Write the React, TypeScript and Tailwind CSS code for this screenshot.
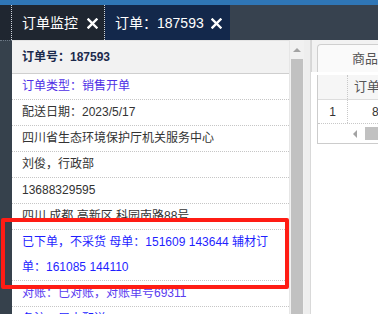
import React from 'react';

const CloseMark: React.FC = () => (
  <svg width="11" height="11" viewBox="0 0 11 11" className="shrink-0">
    <path d="M1.5 1.5 L9.5 9.5 M9.5 1.5 L1.5 9.5" stroke="#fff" strokeWidth="2.4" strokeLinecap="square" />
  </svg>
);

const rows: { text: React.ReactNode; color: string }[] = [
  { text: '订单类型：销售开单', color: 'text-[#4f2fe6]' },
  { text: '配送日期：2023/5/17', color: 'text-[#333333]' },
  { text: '四川省生态环境保护厅机关服务中心', color: 'text-[#333333]' },
  { text: '刘俊，行政部', color: 'text-[#333333]' },
  { text: '13688329595', color: 'text-[#333333]' },
  { text: '四川 成都 高新区 科园南路88号', color: 'text-[#333333]' },
  {
    text: (
      <>
        已下单，不采货 母单：151609 143644 辅材订
        <br />
        单：161085 144110
      </>
    ),
    color: 'text-[#1f1fff]',
  },
  { text: '对账：已对账，对账单号69311', color: 'text-[#5a3cf0]' },
  { text: '备注：周末配送', color: 'text-[#1f1fff]' },
];

export default function App() {
  return (
    <div className="relative h-[314px] w-[378px] overflow-hidden bg-white font-['Liberation_Sans','Noto_Sans_CJK_SC',sans-serif]">
      <div className="h-[5px] bg-[#2f76b6]" />

      {/* tab bar */}
      <div className="flex h-[35px] bg-[#37424f]">
        <div className="w-[11px] bg-[#1f2630]" />
        <div className="flex w-[94px] items-center justify-between border-x border-dotted border-[#cfd6de] bg-[#1f2630] pl-[10px] pr-[6px] pt-[2px] text-[14px] text-white">
          <span>订单监控</span>
          <CloseMark />
        </div>
        <div className="flex w-[125px] items-center justify-between bg-[#13284b] pl-[10px] pr-[8px] pt-[2px] text-[14px] text-white">
          <span>订单：187593</span>
          <CloseMark />
        </div>
      </div>

      {/* body */}
      <div className="flex h-[274px] overflow-hidden">
        <div className="w-[12px] shrink-0 border-t border-dotted border-[#6b7784] bg-[#36414c]" />

        <div className="flex w-[277px] shrink-0 flex-col border-t border-[#e4e4e4]">
          <div className="flex h-[33px] shrink-0 items-center border-b border-[#cfcfcf] bg-[#f2f2f2] pl-[10px] text-[12px] font-bold text-[#1c2a4d]">
            订单号：187593
          </div>
          {rows.map((r, i) => (
            <div
              key={i}
              className={`shrink-0 border-b border-dotted border-[#c6c6c6] pl-[10px] text-[12px] leading-[25px] whitespace-nowrap ${r.color}`}
            >
              {r.text}
            </div>
          ))}
        </div>

        {/* vertical scrollbar */}
        <div className="flex w-[15px] shrink-0 flex-col border-l border-[#e6e6e6] bg-[#f1f1f1]">
          <div className="flex h-[19px] shrink-0 items-center justify-center">
            <div className="h-0 w-0 border-x-[4px] border-b-[4px] border-x-transparent border-b-[#a3a3a3]" />
          </div>
          <div className="ml-[1px] mr-[1px] flex-1 bg-[#c1c1c1]" />
        </div>
        <div className="w-[7px] shrink-0 border-r border-[#d9d9d9] bg-[#eeeeee]" />

        {/* right panel */}
        <div className="flex min-w-0 flex-1 flex-col overflow-hidden bg-white">
          <div className="h-[32px] shrink-0 border-l border-[#d6d6d6] bg-[#f2f2f2] pl-[5px] pt-[4px]">
            <div className="flex h-[28px] items-center rounded-tl-[4px] border-l border-t border-[#cfcfcf] bg-[#fafafa] pl-[34px] text-[13px] whitespace-nowrap text-[#555555]">
              商品明细
            </div>
          </div>
          <div className="ml-[6px] mt-[3px] flex shrink-0 flex-col border-b border-l border-[#cccccc]">
            <div className="flex h-[25px] border-b border-[#dddddd] bg-[#f6f6f6] text-[13px] text-[#555555]">
              <div className="w-[30px] shrink-0 border-r border-dotted border-[#c8c8c8]" />
              <div className="flex items-center whitespace-nowrap pl-[6px]">订单号</div>
            </div>
            <div className="flex h-[24px] border-b border-dotted border-[#c8c8c8] text-[12px] text-[#333333]">
              <div className="flex w-[30px] shrink-0 items-center justify-center border-r border-dotted border-[#c8c8c8]">1</div>
              <div className="flex items-center whitespace-nowrap pl-[24px]">8421</div>
            </div>
            <div className="flex h-[19px] items-center">
              <div className="w-[30px] shrink-0" />
              <div className="flex w-[14px] shrink-0 items-center justify-center">
                <div className="h-0 w-0 border-y-[4px] border-r-[4px] border-y-transparent border-r-[#a3a3a3]" />
              </div>
              <div className="ml-[3px] h-[13px] flex-1 bg-[#c1c1c1]" />
            </div>
          </div>
        </div>
      </div>

      {/* annotation box */}
      <div className="absolute left-[1px] top-[218px] h-[71px] w-[288px] rounded-[2px] border-[4px] border-[#ff1c14]" />
    </div>
  );
}
